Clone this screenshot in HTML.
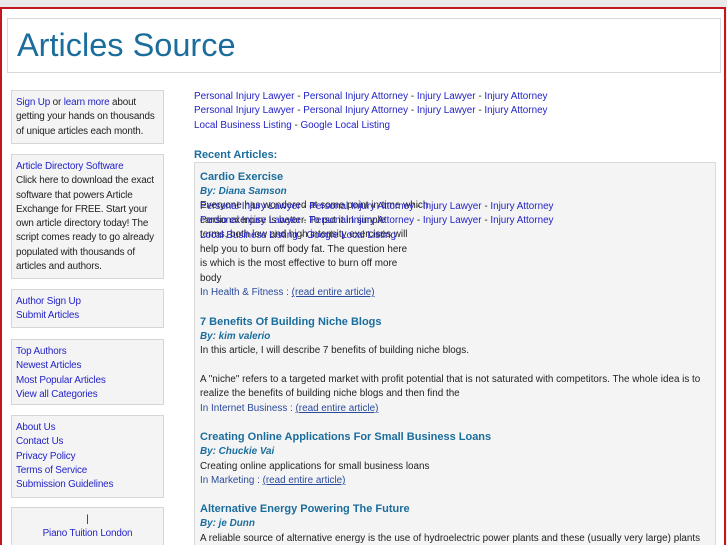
<!DOCTYPE html>
<html style="overflow:hidden;background:#fff"><head><meta charset="utf-8"><style>
body{margin:0;background:#e9e9e9;font-family:"Liberation Sans",sans-serif;font-size:9.9px;color:#222;width:727px;height:545px;overflow:hidden;position:relative}
#wrap{position:absolute;left:0;top:7px;width:722px;height:536px;border:2px solid #c4161c;border-bottom:none;background:#fff;overflow:hidden}
#hdr{position:absolute;left:5px;top:9px;width:712px;height:53px;border:1px solid #d8d8d8}
#hdr h1{margin:0;position:absolute;left:9px;top:8px;font-weight:normal;font-size:32.5px;color:#1a6d9c}
a{color:#2323c8;text-decoration:none}
.box{position:absolute;left:9px;width:143px;border:1px solid #d6d6d6;background:#f4f4f4;padding:5px 4px 4px;line-height:14.3px;letter-spacing:-0.15px}
#main{position:absolute;left:192px;top:81px;width:524px;line-height:14.4px}
h3{margin:0;color:#1a6d9c;font-size:11px;font-weight:bold}
#arts{position:absolute;left:0;top:72px;width:510px;height:390px;overflow:hidden;border:1px solid #dadada;background:#f4f4f4;padding:7px 5px 0}
.t{color:#1a6d9c;font-weight:bold;font-size:11px;line-height:15px}
.by{color:#1a6d9c;font-weight:bold;font-style:italic}
.in{color:#2a4a9c}
.in u{color:#2a4a9c}
.art{margin-bottom:14px}
</style></head><body>
<div id="wrap">
<div id="hdr"><h1>Articles Source</h1></div>
<div class="box" style="top:81px;height:43px"><a>Sign Up</a> or <a>learn more</a> about getting your hands on thousands of unique articles each month.</div>
<div class="box" style="top:145px;height:114px"><a>Article Directory Software</a><br>Click here to download the exact software that powers Article Exchange for FREE. Start your own article directory today! The script comes ready to go already populated with thousands of articles and authors.</div>
<div class="box" style="top:280px;height:28px"><a>Author Sign Up</a><br><a>Submit Articles</a></div>
<div class="box" style="top:330px;height:55px"><a>Top Authors</a><br><a>Newest Articles</a><br><a>Most Popular Articles</a><br><a>View all Categories</a></div>
<div class="box" style="top:406px;height:72px"><a>About Us</a><br><a>Contact Us</a><br><a>Privacy Policy</a><br><a>Terms of Service</a><br><a>Submission Guidelines</a></div>
<div class="box" style="top:498px;height:40px;text-align:center">|<br><a>Piano Tuition London</a></div>
<div id="main">
<div><a>Personal Injury Lawyer</a> - <a>Personal Injury Attorney</a> - <a>Injury Lawyer</a> - <a>Injury Attorney</a><br><a>Personal Injury Lawyer</a> - <a>Personal Injury Attorney</a> - <a>Injury Lawyer</a> - <a>Injury Attorney</a><br><a>Local Business Listing</a> - <a>Google Local Listing</a></div>
<h3 style="position:absolute;top:58px">Recent Articles:</h3>
<div id="arts">
<div class="art" style="position:relative"><div class="t">Cardio Exercise</div><div class="by">By: Diana Samson</div>
<div style="white-space:nowrap;line-height:14.5px">Everyone has wondered at some point in time which<br>cardio exercise is better. To put it in simple<br>terms, both low and high intensity exercises will<br>help you to burn off body fat. The question here<br>is which is the most effective to burn off more<br>body</div>
<div style="position:absolute;left:0;top:30px"><a>Personal Injury Lawyer</a> - <a>Personal Injury Attorney</a> - <a>Injury Lawyer</a> - <a>Injury Attorney</a><br><a>Personal Injury Lawyer</a> - <a>Personal Injury Attorney</a> - <a>Injury Lawyer</a> - <a>Injury Attorney</a><br><a>Local Business Listing</a> - <a>Google Local Listing</a></div>
<div class="in">In Health &amp; Fitness : <u>(read entire article)</u></div></div>
<div class="art"><div class="t">7 Benefits Of Building Niche Blogs</div><div class="by">By: kim valerio</div>
<div>In this article, I will describe 7 benefits of building niche blogs.<br><br>A "niche" refers to a targeted market with profit potential that is not saturated with competitors. The whole idea is to realize the benefits of building niche blogs and then find the</div>
<div class="in">In Internet Business : <u>(read entire article)</u></div></div>
<div class="art"><div class="t">Creating Online Applications For Small Business Loans</div><div class="by">By: Chuckie Vai</div>
<div>Creating online applications for small business loans</div>
<div class="in">In Marketing : <u>(read entire article)</u></div></div>
<div class="art"><div class="t">Alternative Energy Powering The Future</div><div class="by">By: je Dunn</div>
<div>A reliable source of alternative energy is the use of hydroelectric power plants and these (usually very large) plants</div></div>
</div>
</div>
</div>
</body></html>
